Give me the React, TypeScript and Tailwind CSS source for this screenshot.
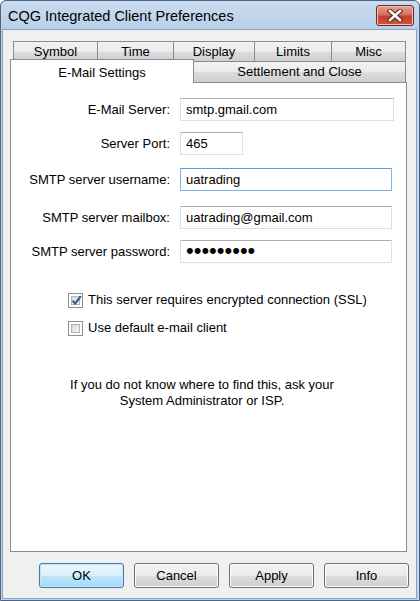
import React from 'react';

const tabBg =
  'bg-[linear-gradient(to_bottom,#f2f2f2_0%,#ebebeb_50%,#dddddd_51%,#cfcfcf_100%)]';

const TopTab = ({ label, w, first }: { label: string; w: string; first?: boolean }) => (
  <div
    className={`${w} ${first ? '' : '-ml-px'} h-[20px] border border-b-0 border-[#898c95] ${tabBg} flex items-center justify-center`}
  >
    {label}
  </div>
);

const Field = ({
  label,
  value,
  w,
  mt,
  focused,
  secret,
}: {
  label: string;
  value: string;
  w: string;
  mt: string;
  focused?: boolean;
  secret?: boolean;
}) => (
  <div className={`flex items-center ${mt}`}>
    <div className="w-[159px] text-right">{label}</div>
    <div
      className={`ml-[10px] ${w} h-[23px] border flex items-center pl-[5px] ${
        focused
          ? 'border-[#7eb4ea] border-t-[#569de5]'
          : 'border-[#dbdfe6] border-t-[#abadb3]'
      }`}
    >
      {secret ? (
        <span className="text-[22px] leading-none -mt-[2px]">{value}</span>
      ) : (
        value
      )}
    </div>
  </div>
);

const Check = ({ checked, label, mt }: { checked?: boolean; label: string; mt: string }) => (
  <div className={`flex items-center h-[16px] ${mt} ml-[57px]`}>
    <div className="w-[15px] h-[15px] border border-[#8e8f8f] bg-white p-[2px]">
      <div className="relative w-full h-full border border-[#b5b5b5] bg-[linear-gradient(135deg,#d8d8d8,#f7f7f7)]">
        {checked && (
          <svg className="absolute -left-[1px] -top-[2px]" width="11" height="11" viewBox="0 0 11 11">
            <path d="M1.6 5.6 L4.2 8.6 L9.8 1.2" fill="none" stroke="#3b5598" strokeWidth="2.2" />
          </svg>
        )}
      </div>
    </div>
    <span className="ml-[5px]">{label}</span>
  </div>
);

const Button = ({ label, primary }: { label: string; primary?: boolean }) => (
  <button
    className={`w-[85px] h-[25px] rounded-[3px] border flex items-center justify-center ${
      primary
        ? 'border-[#3c7fb1] bg-[linear-gradient(to_bottom,#eaf6fd_0%,#d9f0fc_50%,#bee6fd_51%,#a7d9f5_100%)] shadow-[inset_0_0_0_1px_#c6e4f7]'
        : 'border-[#707070] bg-[linear-gradient(to_bottom,#f2f2f2_0%,#ebebeb_50%,#dddddd_51%,#cfcfcf_100%)] shadow-[inset_0_0_0_1px_#fcfcfc]'
    }`}
  >
    {label}
  </button>
);

export default function App() {
  return (
    <div className="w-[420px] h-[601px] bg-white font-['Liberation_Sans',Arial,sans-serif] text-[13px] text-black">
      <div className="w-[420px] h-[601px] flex flex-col border border-[#4a6585] rounded-t-[6px] bg-[#c2d6ec]">
        {/* Title bar */}
        <div className="h-[28px] flex items-start pl-[7px] pr-[5px] rounded-t-[6px] bg-[linear-gradient(to_bottom,#c9dbef,#b9d0e9)]">
          <span className="mt-[7px] text-[14.5px] leading-[17px] text-black">CQG Integrated Client Preferences</span>
          <div className="ml-auto mt-[4px] w-[38px] h-[21px] rounded-[3px] border border-[#6f2a22] bg-[linear-gradient(to_bottom,#e8a493_0%,#d5705e_45%,#c4412c_55%,#c8553f_100%)] shadow-[inset_0_0_0_1px_#eec0b4] flex items-center justify-center">
            <svg width="16" height="13" viewBox="0 0 16 13">
              <path d="M3 2 L13 11 M13 2 L3 11" stroke="#5a2a24" strokeWidth="4.6" strokeLinecap="square" />
              <path d="M3 2 L13 11 M13 2 L3 11" stroke="#ffffff" strokeWidth="2.6" strokeLinecap="square" />
            </svg>
          </div>
        </div>

        {/* Client area */}
        <div className="flex-1 ml-[1px] mr-[2px] mb-[1px] border border-[#8aa2bf] bg-[#f0f0f0] flex flex-col">
          <div className="mt-[11px] ml-[7px] mr-[9px] flex-1 flex flex-col">
            {/* back row of tabs */}
            <div className="flex pl-[3px]">
              <TopTab label="Symbol" w="w-[85px]" first />
              <TopTab label="Time" w="w-[77px]" />
              <TopTab label="Display" w="w-[82px]" />
              <TopTab label="Limits" w="w-[78px]" />
              <TopTab label="Misc" w="w-[75px]" />
            </div>
            {/* front row of tabs */}
            <div className="flex items-end h-[21px]">
              <div className="relative z-10 -mb-px w-[184px] h-[24px] border border-b-0 border-[#898c95] bg-white flex items-start justify-center pt-[3px]">
                E-Mail Settings
              </div>
              <div
                className={`-ml-px w-[213px] h-[21px] border border-b-0 border-[#898c95] ${tabBg} flex items-center justify-center`}
              >
                Settlement and Close
              </div>
            </div>
            {/* panel */}
            <div className="flex-1 border border-[#898c95] bg-white flex flex-col">
              <Field label="E-Mail Server:" value="smtp.gmail.com" w="w-[214px]" mt="mt-[15px]" />
              <Field label="Server Port:" value="465" w="w-[63px]" mt="mt-[11px]" />
              <Field label="SMTP server username:" value="uatrading" w="w-[212px]" mt="mt-[13px]" focused />
              <Field label="SMTP server mailbox:" value="uatrading@gmail.com" w="w-[212px]" mt="mt-[15px]" />
              <Field label="SMTP server password:" value="•••••••••" w="w-[212px]" mt="mt-[11px]" secret />

              <Check checked label="This server requires encrypted connection (SSL)" mt="mt-[29px]" />
              <Check label="Use default e-mail client" mt="mt-[12px]" />

              <div className="mt-[41px] ml-[58px] w-[266px] text-center leading-[16px]">
                If you do not know where to find this, ask your
                <br />
                System Administrator or ISP.
              </div>
            </div>
          </div>

          {/* buttons */}
          <div className="mt-[11px] mb-[10px] flex justify-end gap-[10px] pr-[7px]">
            <Button label="OK" primary />
            <Button label="Cancel" />
            <Button label="Apply" />
            <Button label="Info" />
          </div>
        </div>
      </div>
    </div>
  );
}
